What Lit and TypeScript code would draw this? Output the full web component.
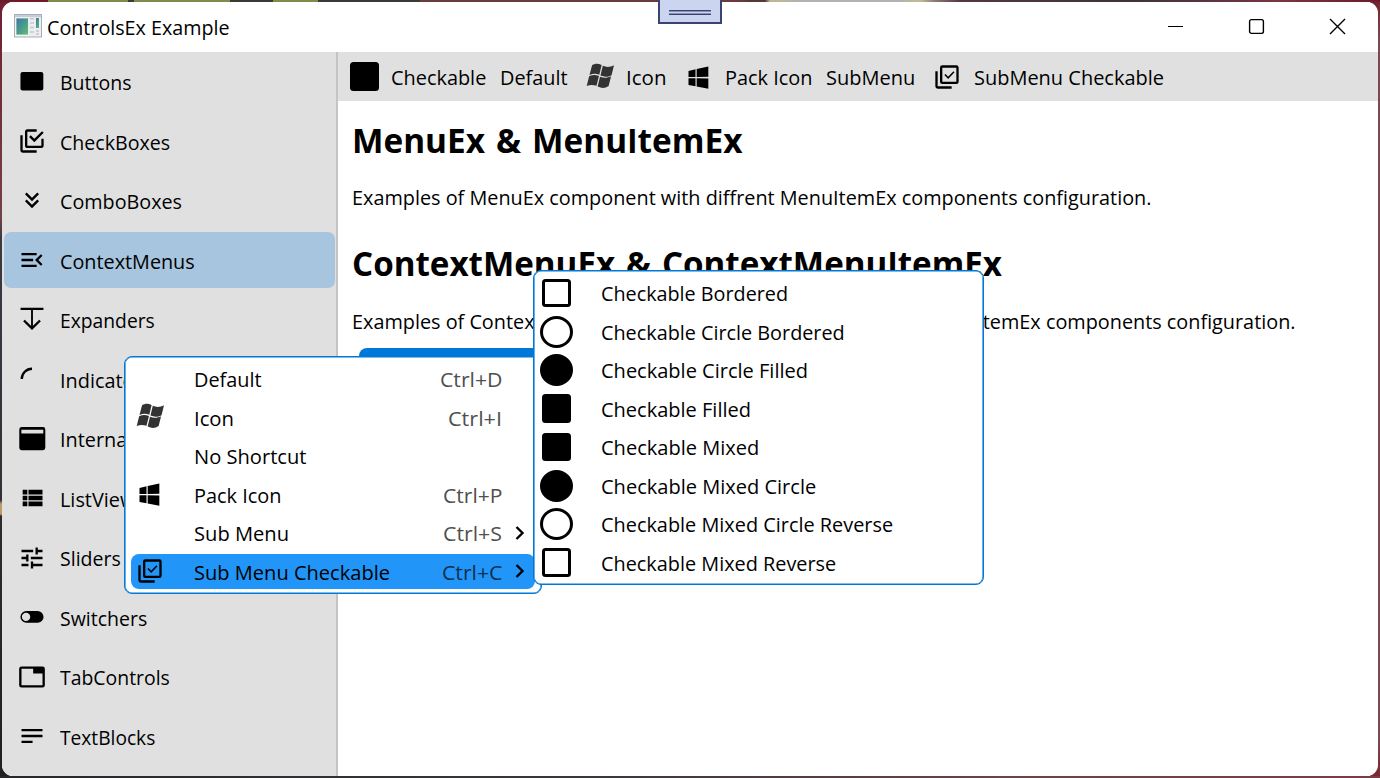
import { LitElement, html, svg, css, nothing } from "lit";
import { customElement, property } from "lit/decorators.js";
import { classMap } from "lit/directives/class-map.js";

/** One line of text, condensed horizontally to a given advance width. */
@customElement("fit-text")
class FitText extends LitElement {
  @property() text = "";
  @property({ type: Number }) w = 0;
  @property({ type: Boolean }) heading = false;
  static styles = css`
    :host { display: inline-block; white-space: nowrap; flex: none; }
    .t { display: inline-block; transform-origin: 0 50%; white-space: pre; }
    .cap { font-family: "Liberation Sans", sans-serif; font-size: 0.99em; line-height: 1; margin: 0 0.02em; }
  `;
  updated() {
    const t = this.renderRoot.querySelector(".t") as HTMLElement;
    t.style.transform = "none";
    const natural = t.getBoundingClientRect().width;
    const target = this.w || natural * 0.965;
    this.style.width = `${target}px`;
    t.style.transform = `scaleX(${target / natural})`;
  }
  render() {
    // Headings use a plain, serifless capital I.
    const parts = this.heading ? this.text.split(/(I)/) : [this.text];
    return html`<span class="t">${parts.map((p) => (this.heading && p === "I" ? html`<span class="cap">I</span>` : p))}</span>`;
  }
}

const backSheet = "M16,20V22H4A2,2 0 0,1 2,20V7H4V20H16Z";

const icons: Record<string, unknown> = {
  button: svg`<rect x="2.1" y="4.2" width="19.6" height="16" rx="1.8"/>`,
  checks: svg`<path d="M20,16V10H22V16A2,2 0 0,1 20,18H8C6.89,18 6,17.1 6,16V4C6,2.89 6.89,2 8,2H16V4H8V16H20M10.91,7.08L14,10.17L20.59,3.58L22,5L14,13L9.5,8.5L10.91,7.08Z"/><path d=${backSheet}/>`,
  combo: svg`<path d="M16.59,5.59L18,7L12,13L6,7L7.41,5.59L12,10.17L16.59,5.59M16.59,11.59L18,13L12,19L6,13L7.41,11.59L12,16.17L16.59,11.59Z"/>`,
  context: svg`<path d="M3,18H16V16H3V18M3,13H13V11H3V13M3,6V8H16V6H3M21,15.59L17.42,12L21,8.41L19.59,7L14.58,12L19.59,17L21,15.59Z"/>`,
  expander: svg`<path fill="none" stroke="#000" stroke-width="2" d="M2.2 3.3H21.8M5.1 13.3L12 20L18.9 13.3"/><path d="M11.2 3.3H12.8V20H11.2Z"/>`,
  indicator: svg`<path fill="none" stroke="#000" stroke-width="2" d="M3.2 12A8.8 8.8 0 0 1 12 3.2"/>`,
  windowed: svg`<path fill-rule="evenodd" d="M3 1.8H21.4A2 2 0 0 1 23.4 3.8V19.6A2 2 0 0 1 21.4 21.6H3A2 2 0 0 1 1.1 19.6V3.8A2 2 0 0 1 3 1.8M2.9 4V7.3H21.7V4Z"/>`,
  list: svg`<path d="M9,5V9H21V5M9,19H21V15H9M9,14H21V10H9M4,9H8V5H4M4,19H8V15H4M4,14H8V10H4V14Z"/>`,
  sliders: svg`<path d="M3,17V19H9V17H3M3,5V7H13V5H3M13,21V19H21V17H13V15H11V21H13M7,9V11H3V13H7V15H9V9H7M21,13V11H11V13H21M15,9H17V7H21V5H17V3H15V9Z"/>`,
  toggle: svg`<path fill-rule="evenodd" d="M7.2 6.8H16.8A5.1 5.1 0 0 1 16.8 17H7.2A5.1 5.1 0 0 1 7.2 6.8M6.9 8.3A3.6 3.6 0 0 0 6.9 15.5A3.6 3.6 0 0 0 6.9 8.3Z"/>`,
  tab: svg`<path d="M21,3H3A2,2 0 0,0 1,5V19A2,2 0 0,0 3,21H21A2,2 0 0,0 23,19V5A2,2 0 0,0 21,3M21,19H3V5H13V9H21V19Z"/>`,
  text: svg`<path d="M3,6V8H21V6M3,11V13H21V11M3,16V18H12.5V16"/>`,
  pack: svg`<path d="M3,12V6.75L9,5.43V11.91L3,12M20,3V11.75L10,11.9V5.21L20,3M3,13L9,13.09V19.9L3,18.75V13M20,13.25V22L10,20.09V13.1L20,13.25Z"/>`,
  checkSheet: svg`<path fill-rule="evenodd" d="M8 2H20A2 2 0 0 1 22 4V16A2 2 0 0 1 20 18H8A2 2 0 0 1 6 16V4A2 2 0 0 1 8 2M8 4V16H20V4Z"/><path d=${backSheet}/><path fill="none" stroke="#000" stroke-width="1.3" d="M10.2 9.9L13 12.7L18 7.5"/>`,
  flag: svg`<g fill="#333" transform="translate(1 0)"><path d="M4.2 2C6.5 .5 9 .2 12.4 1.7L10.4 10.1C7.6 8.9 5 8.9 2 10.3Z"/><path d="M13.4 2.4C16.4 3.8 19.4 3.8 23 2L20.9 10.4C17.6 12.1 14.6 12 11.4 10.8Z"/><path d="M1.7 11.3C4.4 10 7 9.8 10.1 11.1L8 19.6C5 18.4 2.4 18.5 -.4 19.8Z"/><path d="M11 11.8C14.2 13 17 13 20.5 11.4L18.4 19.8C15.2 21.9 12.2 21.7 9 20.2Z"/></g>`,
};

const icon = (name: string) =>
  html`<svg class="icon" viewBox="0 0 24 24">${icons[name]}</svg>`;

const nav: [string, string, number][] = [
  ["button", "Buttons", 71.5],
  ["checks", "CheckBoxes", 110],
  ["combo", "ComboBoxes", 122],
  ["context", "ContextMenus", 134.7],
  ["expander", "Expanders", 94.8],
  ["indicator", "Indicators", 0],
  ["windowed", "InternalMessages", 0],
  ["list", "ListViews", 0],
  ["sliders", "Sliders", 60.8],
  ["toggle", "Switchers", 87.3],
  ["tab", "TabControls", 109.8],
  ["text", "TextBlocks", 95.3],
];

const menu: [string, string, number, string, number, boolean][] = [
  ["", "Default", 67.5, "Ctrl+D", 62.5, false],
  ["flag", "Icon", 40, "Ctrl+I", 54, false],
  ["", "No Shortcut", 112.5, "", 0, false],
  ["pack", "Pack Icon", 87.5, "Ctrl+P", 59.5, false],
  ["", "Sub Menu", 95, "Ctrl+S", 59, true],
  ["checkSheet", "Sub Menu Checkable", 196, "Ctrl+C", 60.5, true],
];

const submenu: [string, string, number][] = [
  ["square", "Checkable Bordered", 187],
  ["circle", "Checkable Circle Bordered", 243.7],
  ["circle filled", "Checkable Circle Filled", 207],
  ["square filled", "Checkable Filled", 150],
  ["square filled", "Checkable Mixed", 158.2],
  ["circle filled", "Checkable Mixed Circle", 215.2],
  ["circle", "Checkable Mixed Circle Reverse", 292.1],
  ["square", "Checkable Mixed Reverse", 235.2],
];

@customElement("app-root")
class AppRoot extends LitElement {
  static styles = css`
    :host {
      display: block; position: relative; box-sizing: border-box;
      width: 1380px; height: 778px; padding: 2px; overflow: hidden;
      font: 20.6px/28px "Open Sans", "Noto Sans", sans-serif; color: #000;
      background:
        linear-gradient(90deg, #6f1a2a 0 48px, #828b4c 48px 128px, #3d3936 128px 134px, #828b4c 134px 230px, #3d3936 230px 273px, #828b4c 273px 318px, #3d3936 318px 420px, #6b3a40 420px 740px, #54383c 750px 765px, #bdb98c 770px, #b5b1b0 800px 900px, #c0bd90 920px, #8c7a76 935px, #54383f 960px, #3c3438 1130px, #7a3544 1280px, #6b1a2a 1380px) 0 0 / 100% 2px no-repeat,
        linear-gradient(90deg, #26262b 0, #3a383d 600px, #6b4348 1000px, #7a3d45 1370px) 0 100% / 100% 2px no-repeat,
        linear-gradient(#6f2030 0, #74404a 218px, #3a3a44 238px, #303036 500px, #c09a68 504px 514px, #2b2b30 516px, #202024) 0 0 / 10px 100% no-repeat,
        linear-gradient(#74202f 0, #7c4850 40px, #7c4850 740px, #7a2530 778px) 100% 0 / 10px 100% no-repeat;
    }
    .icon { width: 28px; height: 28px; flex: none; overflow: visible; }
    .window {
      box-sizing: border-box; height: 774px; border-radius: 11px; overflow: hidden;
      background: #fff; display: flex; flex-direction: column;
    }
    .titlebar { box-sizing: border-box; height: 50px; flex: none; display: flex; align-items: center; padding: 0 32px 1.5px 12px; }
    .app-icon { width: 28px; height: 24px; margin-right: 5px; }
    .title { padding-top: 1px; }
    .caption { width: 17px; height: 17px; margin-left: 64px; fill: none; stroke: #000; stroke-width: 1.2; }
    .body { flex: 1; display: flex; min-height: 0; }
    .sidebar {
      box-sizing: border-box; width: 336px; flex: none; background: #e0e0e0;
      border-right: 2px solid #c4c4c4; padding: 1.5px 1px 0 2px;
      display: flex; flex-direction: column; gap: 3.55px;
    }
    .nav { box-sizing: border-box; height: 56px; flex: none; border-radius: 7px; display: flex; align-items: center; gap: 14.2px; padding-left: 13.6px; }
    .nav.active { background: #a7c5de; }
    .nav .icon { margin-top: -0.5px; }
    .nav fit-text { padding-top: 1px; }
    .main { flex: 1; min-width: 0; }
    .menubar { height: 49px; background: #e0e0e0; display: flex; align-items: center; }
    .menubar .check { width: 29.3px; height: 29px; border-radius: 3.5px; background: #000; margin: 0 11.8px 0 11.7px; }
    .page { padding: 0 13px 0 14px; display: flex; flex-direction: column; align-items: flex-start; }
    .h { font-size: 34.6px; line-height: 50px; font-weight: 700; word-spacing: 0.07em; }
    .h1 { margin-top: 13.5px; }
    .p1 { margin-top: 18.5px; }
    .h2 { margin-top: 27px; margin-left: -0.5px; }
    .p2 { margin-top: 18.5px; }
    .button { width: 240px; height: 40px; margin: 13px 0 0 7px; background: #0078d7; border-radius: 8px; }
    .drag-grip {
      position: absolute; left: 658px; top: -2px; box-sizing: border-box; width: 64px; height: 26px;
      border: 2px solid #3b4373; background: #ccd5f0; padding: 10px 9px;
    }
    .grip-lines { height: 3px; border: solid #3b4373; border-width: 1px 0; background: linear-gradient(#8791b8 0 1px, #ccd5f0 1px 2px, #8791b8 2px); }
    .popup {
      position: absolute; box-sizing: border-box; background: #fff; border: 1px solid #0078d7;
      box-shadow: inset 0 0 0 0.6px #0078d7; border-radius: 8px;
      display: flex; flex-direction: column; gap: 3.5px;
    }
    .context { left: 124px; top: 356px; width: 418px; height: 238px; padding: 4.5px 6.5px 0 6px; }
    .row { height: 35px; flex: none; display: flex; align-items: center; border-radius: 8px; }
    .context .row { padding-right: 9.5px; }
    .row.active { background: #2196f8; }
    .glyph { width: 28px; margin-left: 5px; margin-right: 29.7px; display: flex; margin-top: -0.5px; }
    .space { flex: 1; }
    .short { color: #4f4f4f; }
    .active .short { color: #10304d; }
    .chevron { width: 10px; height: 16px; margin-left: 13px; fill: none; stroke: #000; stroke-width: 2.4; margin-top: -1px; }
    .chevron-gap { width: 23px; }
    .sub { left: 533px; top: 270px; width: 451px; height: 315px; padding: 4.5px 5px 0 6px; }
    .box { width: 33px; margin-right: 27.6px; display: flex; justify-content: center; }
    .mark { box-sizing: border-box; border: 3px solid #000; }
    .square { width: 29.5px; height: 28.5px; border-radius: 3.5px; }
    .circle { width: 33px; height: 32px; border-radius: 50%; }
    .filled { background: #000; }
    .mb-default { margin-left: 14px; }
    .mb-flag { margin-left: 18px; margin-right: 12.3px; display: flex; }
    .mb-pack { margin-left: 18.8px; margin-right: 12px; display: flex; }
    .mb-sub { margin-left: 13.4px; }
    .mb-check { margin-left: 18.1px; margin-right: 13px; display: flex; }
  `;

  render() {
    return html`
      <div class="window">
        <div class="titlebar">
          <svg class="app-icon" viewBox="0 0 28 24">
            <defs>
              <linearGradient id="g" x1="0" y1="0" x2="1" y2="1"><stop offset="0" stop-color="#3f76a5" /><stop offset=".5" stop-color="#479a8c" /><stop offset="1" stop-color="#69bf6b" /></linearGradient>
            </defs>
            <rect x=".5" y=".5" width="27" height="22.5" fill="#eceef0" stroke="#a9adb5" />
            <rect x="1" y="1" width="26" height="2.2" fill="#c9ccd3" />
            <rect x="2" y="4" width="12.5" height="17" fill="url(#g)" stroke="#fff" stroke-width=".7" />
            <path d="M16 4.8H20M16 9H20M16 13.5H20M16 18H20M22 17H25M22 20H25" stroke="#c4c7cc" stroke-width="1.6" />
            <rect x="22" y="4" width="3" height="10" fill="url(#g)" />
          </svg>
          <fit-text class="title" .text=${"ControlsEx Example"} .w=${182.5}></fit-text>
          <span class="space"></span>
          <svg class="caption" viewBox="0 0 17 17"><path d="M1 8.5H16" /></svg>
          <svg class="caption" viewBox="0 0 17 17"><rect x="1.6" y="1.6" width="13.8" height="13.8" rx="1.8" stroke-width="1.4" /></svg>
          <svg class="caption" viewBox="0 0 17 17"><path d="M1 1L16 16M16 1L1 16" stroke-width="1.4" /></svg>
        </div>
        <div class="body">
          <div class="sidebar">
            ${nav.map(
              ([ic, label, w]) => html`<div class=${classMap({ nav: true, active: ic === "context" })}>
                ${icon(ic)}<fit-text .text=${label} .w=${w}></fit-text>
              </div>`,
            )}
          </div>
          <div class="main">
            <div class="menubar">
              <span class="check"></span>
              <fit-text .text=${"Checkable"} .w=${95.3}></fit-text>
              <fit-text class="mb-default" .text=${"Default"} .w=${67.5}></fit-text>
              <span class="mb-flag">${icon("flag")}</span>
              <fit-text .text=${"Icon"} .w=${40.5}></fit-text>
              <span class="mb-pack">${icon("pack")}</span>
              <fit-text .text=${"Pack Icon"} .w=${87.5}></fit-text>
              <fit-text class="mb-sub" .text=${"SubMenu"} .w=${89.3}></fit-text>
              <span class="mb-check">${icon("checkSheet")}</span>
              <fit-text .text=${"SubMenu Checkable"} .w=${190}></fit-text>
            </div>
            <div class="page">
              <fit-text class="h h1" heading .text=${"MenuEx & MenuItemEx"} .w=${390.5}></fit-text>
              <fit-text class="p1" .text=${"Examples of MenuEx component with diffrent MenuItemEx components configuration."} .w=${799.5}></fit-text>
              <fit-text class="h h2" heading .text=${"ContextMenuEx & ContextMenuItemEx"} .w=${650}></fit-text>
              <fit-text class="p2" .text=${"Examples of ContextMenuEx component with diffrent ContextMenuItemEx components configuration."} .w=${943.5}></fit-text>
              <div class="button"></div>
            </div>
          </div>
        </div>
      </div>

      <div class="drag-grip"><div class="grip-lines"></div></div>

      <div class="popup context">
        ${menu.map(
          ([ic, label, w, key, kw, more]) => html`<div class=${classMap({ row: true, active: ic === "checkSheet" })}>
            <span class="glyph">${ic ? icon(ic) : nothing}</span>
            <fit-text .text=${label} .w=${w}></fit-text>
            <span class="space"></span>
            ${key ? html`<fit-text class="short" .text=${key} .w=${kw}></fit-text>` : nothing}
            ${more
              ? html`<svg class="chevron" viewBox="0 0 10 16"><path d="M1.5 2L7.5 8L1.5 14" /></svg>`
              : html`<span class="chevron-gap"></span>`}
          </div>`,
        )}
      </div>

      <div class="popup sub">
        ${submenu.map(
          ([shape, label, w]) => html`<div class="row">
            <span class="box"><span class="mark ${shape}"></span></span>
            <fit-text .text=${label} .w=${w}></fit-text>
          </div>`,
        )}
      </div>
    `;
  }
}
